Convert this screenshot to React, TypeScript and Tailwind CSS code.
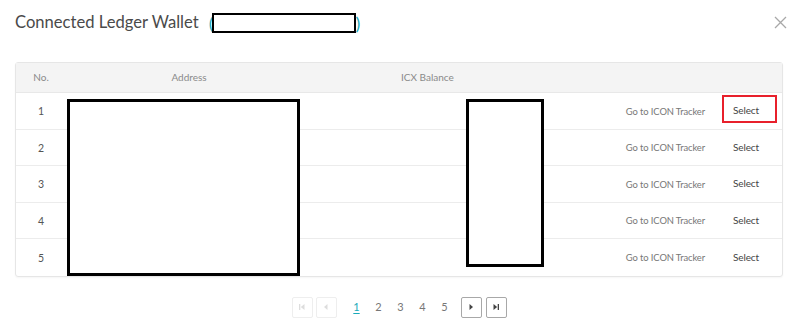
const rows = [1, 2, 3, 4, 5]

function FirstIcon({ color }: { color: string }) {
  return (
    <svg width="8" height="8" viewBox="0 0 8 8">
      <rect x="1" y="1" width="1.3" height="6" fill={color} />
      <path d="M6.5 1 L2.8 4 L6.5 7 Z" fill={color} />
    </svg>
  )
}

function PrevIcon({ color }: { color: string }) {
  return (
    <svg width="8" height="8" viewBox="0 0 8 8">
      <path d="M5.5 1 L2 4 L5.5 7 Z" fill={color} />
    </svg>
  )
}

function NextIcon({ color }: { color: string }) {
  return (
    <svg width="8" height="8" viewBox="0 0 8 8">
      <path d="M2.5 1 L6 4 L2.5 7 Z" fill={color} />
    </svg>
  )
}

function LastIcon({ color }: { color: string }) {
  return (
    <svg width="8" height="8" viewBox="0 0 8 8">
      <path d="M1.5 1 L5.2 4 L1.5 7 Z" fill={color} />
      <rect x="5.7" y="1" width="1.3" height="6" fill={color} />
    </svg>
  )
}

export default function App() {
  return (
    <div
      className="relative w-[800px] h-[329px] bg-white overflow-hidden"
      style={{ fontFamily: 'Lato, "Noto Sans", sans-serif' }}
    >
      {/* header */}
      <div className="flex items-center h-[42px] pl-[15px] pr-[13px] pt-[3px]">
        <h1 className="text-[16.6px] text-[#4a4a4a] leading-none">Connected Ledger Wallet</h1>
        <div className="flex items-center ml-[10px] text-[#1aaaba] text-[18px] leading-none">
          <span>(</span>
          <div className="w-[144px] h-[20px] border-[2px] border-black bg-white -mx-[1px]" />
          <span>)</span>
        </div>
        <button className="ml-auto w-[14px] h-[14px] flex items-center justify-center">
          <svg width="13" height="13" viewBox="0 0 13 13">
            <path d="M1 1 L12 12 M12 1 L1 12" stroke="#a8a8a8" strokeWidth="1.3" />
          </svg>
        </button>
      </div>

      {/* table */}
      <div className="relative mt-[20px] ml-[15px] mr-[17px] border border-[#e6e6e6] rounded-[3px] shadow-[0_1px_2px_rgba(0,0,0,0.04)] text-[10px]">
        <div className="flex items-center h-[30px] bg-[#f4f4f4] text-[#8a8a8a] border-b border-[#e8e8e8]">
          <div className="w-[50px] text-center">No.</div>
          <div className="w-[246px] text-center">Address</div>
          <div className="w-[89px]" />
          <div className="flex-1">ICX Balance</div>
        </div>
        {rows.map((n, i) => (
          <div
            key={n}
            className={`flex items-center h-[36.5px] ${i < rows.length - 1 ? 'border-b border-[#ececec]' : ''}`}
          >
            <div className="w-[50px] text-center text-[#555] text-[10.5px] pt-[3px]">{n}</div>
            <div className="w-[246px]" />
            <div className="w-[89px]" />
            <div className="flex-1" />
            <div className="text-[#777] text-[9.4px] tracking-[-0.1px] mr-[11px] pt-[2px]">Go to ICON Tracker</div>
            <div className="w-[60px] mr-[6px] text-center text-[#444] tracking-[-0.1px]">Select</div>
          </div>
        ))}

        {/* highlighted select */}
        <div className="absolute left-[706px] top-[32px] w-[55px] h-[28px] border-[2px] border-[#e8202b]" />
      </div>

      {/* redaction boxes */}
      <div className="absolute left-[67px] top-[99px] w-[233px] h-[177px] border-[3px] border-black bg-white" />
      <div className="absolute left-[466px] top-[99px] w-[78px] h-[168px] border-[3px] border-black bg-white" />

      {/* pagination */}
      <div className="flex items-center justify-center mt-[20px] pr-[2px] text-[11px]">
        <button className="w-[21px] h-[21px] flex items-center justify-center border border-[#eeeeee] rounded-[2px]">
          <FirstIcon color="#dddddd" />
        </button>
        <button className="w-[21px] h-[21px] ml-[3px] flex items-center justify-center border border-[#eeeeee] rounded-[2px]">
          <PrevIcon color="#dddddd" />
        </button>
        <div className="flex items-center gap-[12px] ml-[15px] mr-[11px]">
          <span className="text-[#1aaaba] underline underline-offset-2 w-[10px] text-center">1</span>
          <span className="text-[#777] w-[10px] text-center">2</span>
          <span className="text-[#777] w-[10px] text-center">3</span>
          <span className="text-[#777] w-[10px] text-center">4</span>
          <span className="text-[#777] w-[10px] text-center">5</span>
        </div>
        <button className="w-[21px] h-[21px] flex items-center justify-center border border-[#a8a8a8] rounded-[2px]">
          <NextIcon color="#444" />
        </button>
        <button className="w-[21px] h-[21px] ml-[4px] flex items-center justify-center border border-[#a8a8a8] rounded-[2px]">
          <LastIcon color="#444" />
        </button>
      </div>
    </div>
  )
}
